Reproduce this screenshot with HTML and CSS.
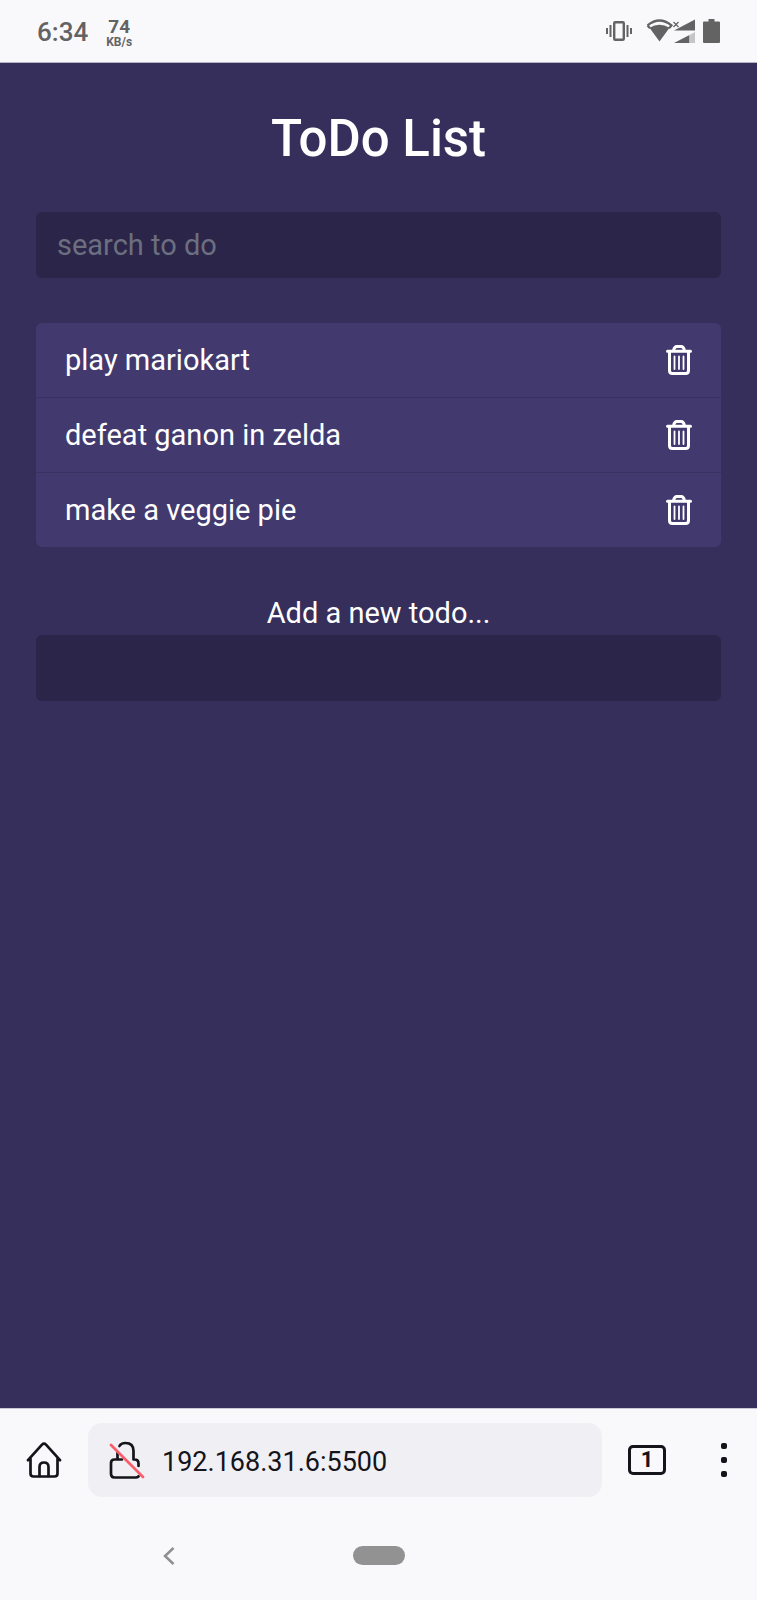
FILE: index.html
```html
<!DOCTYPE html>
<html lang="en">
<head>
<meta charset="utf-8">
<meta name="viewport" content="width=device-width, initial-scale=1">
<title>ToDo List</title>
<link rel="stylesheet" href="styles.css">
</head>
<body>
<svg class="defs" aria-hidden="true">
  <symbol id="trash" viewBox="0 0 26 30">
    <g fill="none" stroke="currentColor" stroke-linecap="round" stroke-linejoin="round">
      <path stroke-width="3" d="M1.500 6.300h23M3.500 6.500v18.900q0 3 3 3h13q3 0 3-3V6.500M7.500 5.800q.8-4.300 3.300-4.300h4.400q2.500 0 3.300 4.300"/>
      <path stroke-width="1.800" d="M8.500 11.500v12.500M13 11.500v12.500M17.500 11.500v12.500"/>
    </g>
  </symbol>
</svg>

<header class="status">
  <span class="clock">6:34</span>
  <span class="speed"><b class="speed-value">74</b><b class="speed-unit">KB/s</b></span>
  <span class="status-icons">
    <svg width="26" height="20" viewBox="0 0 26 20" fill="none" stroke="currentColor" aria-hidden="true">
      <rect x="8.200" y="1.200" width="9.600" height="17.600" rx="1" stroke-width="2.400"/>
      <path stroke-width="2" d="M1 7v6M4.500 4v12M21.500 4v12M25 7v6"/>
    </svg>
    <svg class="wifi" width="49" height="24" viewBox="0 0 49 24" aria-hidden="true">
      <path fill="none" stroke="currentColor" stroke-width="2.200" d="M1.500 6.400Q13.500-3.400 25.500 6.400L23 9.200M1.500 6.400L4 9.200"/>
      <path fill="currentColor" d="M3.500 8.800Q13.500 2.500 23.500 8.800L13.500 22.500z"/>
      <path fill="none" stroke="currentColor" stroke-width="1.200" d="M27.500 3l5 5M32.500 3l-5 5"/>
      <path fill="currentColor" d="M49 .5V11.500H28zM43.500 16V24H28z"/>
      <path fill="#c6c6c8" d="M43.500 16L49 13v11h-5.500z"/>
    </svg>
    <svg width="17" height="24" viewBox="0 0 17 24" aria-hidden="true">
      <path fill="currentColor" d="M5.500 0h6v2.500H16q1 0 1 1V23q0 1-1 1H1q-1 0-1-1V3.500q0-1 1-1h4.500z"/>
    </svg>
  </span>
</header>

<main class="app">
  <h1 class="title">ToDo List</h1>
  <form class="search">
    <input class="field" type="text" aria-label="search to do" placeholder="search to do">
  </form>
  <ul class="todos">
    <li class="todo"><span>play mariokart</span><button class="delete" type="button" aria-label="Delete play mariokart"><svg width="26" height="30"><use href="#trash"/></svg></button></li>
    <li class="todo"><span>defeat ganon in zelda</span><button class="delete" type="button" aria-label="Delete defeat ganon in zelda"><svg width="26" height="30"><use href="#trash"/></svg></button></li>
    <li class="todo"><span>make a veggie pie</span><button class="delete" type="button" aria-label="Delete make a veggie pie"><svg width="26" height="30"><use href="#trash"/></svg></button></li>
  </ul>
  <form class="add">
    <label class="add-label" for="add">Add a new todo...</label>
    <input class="field" id="add" type="text">
  </form>
</main>

<footer class="browser">
  <div class="toolbar">
    <button class="tool" type="button" aria-label="Home">
      <svg width="36" height="36" viewBox="0 0 36 36" fill="none" stroke="currentColor" stroke-width="2.700" stroke-linecap="round" stroke-linejoin="round" aria-hidden="true">
        <path d="M2 18.200L16 2.600q2-2 4 0L34 18.200M4.500 16.500V31.500q0 3 3 3h21q3 0 3-3V16.500"/>
        <path d="M13.500 34V25q0-4.500 4.500-4.500t4.500 4.500v9"/>
      </svg>
    </button>
    <div class="address">
      <svg width="36" height="38" viewBox="0 0 36 38" fill="none" stroke-width="2.700" stroke-linecap="round" stroke-linejoin="round" aria-hidden="true">
        <path stroke="currentColor" d="M8.500 11.500v7M13 18.500H5.500q-3.500 0-3.500 3.500v11q0 3.500 3.500 3.500h21q2 0 3-1.200M10.500 5Q12 2 16.500 2q8 0 8 8v8.500h1q4 0 4 4v2.500"/>
        <path stroke="#fa5c6c" d="M2 4l32 32"/>
      </svg>
      <input class="url" type="text" inputmode="url" aria-label="Address" value="192.168.31.6:5500">
    </div>
    <button class="tool tabs" type="button" aria-label="Open tabs: 1">1</button>
    <button class="tool" type="button" aria-label="Menu">
      <svg width="6" height="34" viewBox="0 0 6 34" fill="currentColor" aria-hidden="true">
        <rect width="6" height="6" y="0" rx="2"/><rect width="6" height="6" y="14" rx="2"/><rect width="6" height="6" y="28" rx="2"/>
      </svg>
    </button>
  </div>
  <nav class="system">
    <button class="tool back" type="button" aria-label="Back">
      <svg width="12" height="18" viewBox="0 0 12 18" fill="none" stroke="currentColor" stroke-width="2.500" aria-hidden="true"><path d="M10.500 1L2 9l8.500 8"/></svg>
    </button>
    <button class="tool pill" type="button" aria-label="Home screen"></button>
  </nav>
</footer>
</body>
</html>
```
FILE: styles.css
```css
* { box-sizing: border-box; }

body {
  margin: 0;
  min-height: 100vh;
  display: flex;
  flex-direction: column;
  background: #f9f9fb;
  color: #fff;
  font: 29px/36px Roboto, "Noto Sans", sans-serif;
}

svg { display: block; flex: none; }
.defs { position: absolute; width: 0; height: 0; }

button, input { font: inherit; border: 0; }
button { background: none; padding: 0; }

/* Status bar */
.status {
  height: 63px;
  padding: 0 37px;
  display: flex;
  align-items: center;
  gap: 18px;
  color: #636364;
  border-bottom: 1px solid #b5b3c4;
}
.clock { font-size: 26px; padding-top: 2px; font-weight: 500; }
.speed { display: flex; flex-direction: column; align-items: center; padding-top: 2px; }
.speed-value { font-size: 19px; line-height: 19px; font-weight: 700; }
.speed-unit { font-size: 12px; line-height: 12px; font-weight: 700; }
.status-icons { margin-left: auto; display: flex; align-items: center; gap: 8px; }
.wifi { margin-left: 6px; }

/* Todo page */
.app {
  flex: 1;
  padding: 46px 36px;
  background: #362f5b;
}
.title {
  margin: 0 0 43px;
  font-size: 51px;
  line-height: 60px;
  font-weight: 500;
  text-align: center;
}
.field {
  display: block;
  width: 100%;
  height: 66px;
  padding: 0 21px;
  border-radius: 6px;
  background: #2a2549;
  color: #fff;
}
.field::placeholder { color: #6c6f80; opacity: 1; }
.todos {
  list-style: none;
  margin: 45px 0 48px;
  padding: 0;
  border-radius: 6px;
  overflow: hidden;
  background: #423a6f;
}
.todo {
  height: 74px;
  padding: 0 29px;
  display: flex;
  align-items: center;
  justify-content: space-between;
}
.todo + .todo { height: 75px; border-top: 1px solid #393160; }
.delete { color: #fff; }
.add-label { display: block; margin-bottom: 4px; text-align: center; }

/* Browser toolbar and system navigation */
.browser { border-top: 1px solid #c9c8d6; color: #15141a; }
.toolbar {
  display: flex;
  align-items: center;
  padding: 14px 30px 0 26px;
  gap: 26px;
}
.tool { color: inherit; }
.address {
  flex: 1;
  min-width: 0;
  height: 74px;
  padding: 0 21px;
  display: flex;
  align-items: center;
  gap: 17px;
  border-radius: 14px;
  background: #f0f0f4;
}
.url {
  flex: 1;
  min-width: 0;
  padding: 3px 0 0;
  font-size: 27px;
  background: none;
  color: #15141a;
}
.tabs {
  width: 38px;
  height: 30px;
  margin-right: 29px;
  border: 3px solid #15141a;
  border-radius: 5px;
  font-size: 22px;
  line-height: 24px;
  font-weight: 700;
}
.system {
  height: 103px;
  padding-top: 14px;
  display: grid;
  grid-template-columns: 1fr 52px 1fr;
  align-items: center;
  color: #8f8f90;
}
.back { justify-self: center; margin-right: 14px; }
.pill { height: 19px; border-radius: 10px; background: #929292; }
```
